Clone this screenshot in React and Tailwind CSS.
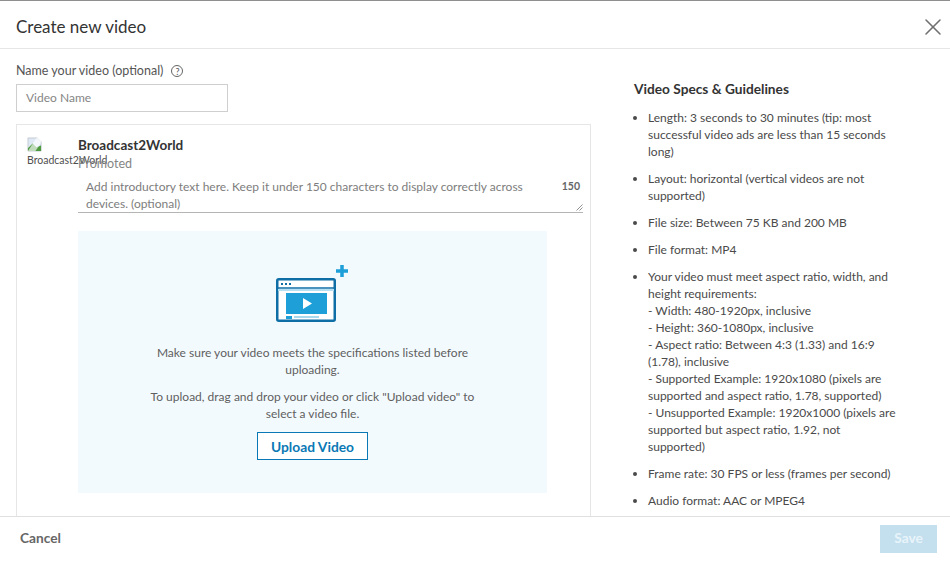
import { X } from "lucide-react";

const specs = [
  ["Length: 3 seconds to 30 minutes (tip: most successful video ads are less than 15 seconds long)"],
  ["Layout: horizontal (vertical videos are not supported)"],
  ["File size: Between 75 KB and 200 MB"],
  ["File format: MP4"],
  [
    "Your video must meet aspect ratio, width, and height requirements:",
    "- Width: 480-1920px, inclusive",
    "- Height: 360-1080px, inclusive",
    "- Aspect ratio: Between 4:3 (1.33) and 16:9 (1.78), inclusive",
    "- Supported Example: 1920x1080 (pixels are supported and aspect ratio, 1.78, supported)",
    "- Unsupported Example: 1920x1000 (pixels are supported but aspect ratio, 1.92, not supported)",
  ],
  ["Frame rate: 30 FPS or less (frames per second)"],
  ["Audio format: AAC or MPEG4"],
];

function BrokenImage() {
  return (
    <svg width="15" height="15" viewBox="0 0 16 16" className="block">
      <path d="M1 1h10l4 4v10H1z" fill="#dfe8f5" stroke="#b9c0c9" strokeWidth="0.8" />
      <path d="M1 12l5-5 4 4 5-2v6H1z" fill="#4d9a3f" />
      <path d="M10 1l-9 14h8l6-9V1z" fill="#ffffff" opacity="0.65" />
    </svg>
  );
}

function VideoIcon() {
  return (
    <svg width="74" height="58" viewBox="0 0 74 58" className="block">
      <rect x="1.25" y="15.25" width="57.5" height="41.5" rx="1.5" fill="#ffffff" stroke="#0f6ea6" strokeWidth="2.5" />
      <path d="M2 24h56" stroke="#0f6ea6" strokeWidth="1.5" />
      <path d="M2 26h56" stroke="#b5dff2" strokeWidth="2" />
      <rect x="5" y="19" width="2" height="2" fill="#0f6ea6" />
      <rect x="9" y="19" width="2" height="2" fill="#0f6ea6" />
      <rect x="13" y="19" width="2" height="2" fill="#0f6ea6" />
      <rect x="10" y="29" width="41" height="21" fill="#1e9fd8" />
      <path d="M27 34l9 5.5-9 5.5z" fill="#ffffff" />
      <rect x="10" y="52" width="6" height="3" fill="#1e9fd8" />
      <rect x="18" y="52" width="25" height="2" fill="#a9d9ef" />
      <path d="M66 1v12M60 7h12" stroke="#1e9fd8" strokeWidth="3.5" />
    </svg>
  );
}

export default function App() {
  return (
    <div className="flex h-[561px] w-[950px] flex-col overflow-hidden border-t border-[#8f8f8f] bg-white font-['Lato','Noto_Sans',sans-serif] text-[#4a4a4a]">
      <header className="flex h-[48px] shrink-0 items-center justify-between border-b border-[#e6e6e6] pl-4 pr-[3px] pt-[4px]">
        <h1 className="text-[17px] text-[#333333]">Create new video</h1>
        <X size={28} strokeWidth={1.3} className="text-[#6f6f6f]" />
      </header>

      <div className="flex min-h-0 flex-1 overflow-hidden">
        <div className="w-[591px] shrink-0 pl-4 pt-[13px]">
          <div className="flex items-center gap-2 text-[12.5px] leading-[18px] text-[#555555]">
            <span>Name your video (optional)</span>
            <span className="flex h-[12px] w-[12px] items-center justify-center rounded-full border border-[#666666] text-[9px] leading-none">?</span>
          </div>
          <div className="mt-[4px] flex h-[28px] w-[212px] items-center border border-[#cfcfcf] px-[9px] text-[12px] text-[#858585]">
            Video Name
          </div>

          <div className="mt-[12px] h-[420px] border border-[#e6e6e6] pl-[10px] pr-[7px] pt-[12px]">
            <div className="flex">
              <div className="h-[46px] w-[51px] shrink-0 overflow-visible whitespace-nowrap text-[10.5px] leading-[14px] text-[#4f4f4f]">
                <BrokenImage />
                <div className="mt-[1px]">Broadcast2World</div>
              </div>
              <div className="min-w-0 flex-1">
                <div className="text-[13.5px] font-bold leading-[16px] text-[#333333]">Broadcast2World</div>
                <div className="mt-[2px] text-[12.5px] leading-[18px] text-[#858585]">Promoted</div>
                <div className="flex h-[40px] border-b border-[#b5b5b5] pl-2 pt-[5px] text-[12px] leading-[17px] text-[#7d7d7d]">
                  <p className="w-[445px]">Add introductory text here. Keep it under 150 characters to display correctly across devices. (optional)</p>
                  <div className="ml-auto flex flex-col items-end justify-between">
                    <span className="mr-[3px] whitespace-nowrap text-[10.5px] font-bold leading-[17px] text-[#666666]">150</span>
                    <svg width="7" height="7" viewBox="0 0 7 7" className="mb-[1px]">
                      <path d="M0.5 6.5L6.5 0.5M3.5 6.5L6.5 3.5" stroke="#777777" strokeWidth="0.8" />
                    </svg>
                  </div>
                </div>
                <div className="mt-[18px] flex h-[262px] w-[469px] flex-col items-center bg-[#f3fafe] pt-[33px] text-center text-[12px] leading-[17px] text-[#5f5f5f]">
                  <VideoIcon />
                  <p className="mt-[22px] w-[330px]">Make sure your video meets the specifications listed before uploading.</p>
                  <p className="mt-[10px] w-[340px]">To upload, drag and drop your video or click "Upload video" to select a video file.</p>
                  <div className="mt-[10px] flex h-[28px] w-[111px] items-center justify-center border border-[#0a78b5] bg-white text-[13.8px] font-bold text-[#0a78b5]">
                    Upload Video
                  </div>
                </div>
              </div>
            </div>
          </div>
        </div>

        <aside className="ml-[43px] w-[265px] pt-[31px]">
          <h2 className="text-[13.7px] font-bold leading-[18px] text-[#333333]">Video Specs &amp; Guidelines</h2>
          <ul className="mt-[11px] flex list-disc flex-col gap-[10px] pl-[14px] text-[12px] leading-[17px] text-[#4a4a4a]">
            {specs.map((lines) => (
              <li key={lines[0]}>
                {lines.map((line) => (
                  <div key={line}>{line}</div>
                ))}
              </li>
            ))}
          </ul>
        </aside>
      </div>

      <footer className="flex h-[45px] shrink-0 items-center justify-between border-t border-[#e0e0e0] pb-[1px] pl-[20px] pr-[13px]">
        <span className="text-[13.7px] font-bold text-[#666666]">Cancel</span>
        <span className="flex h-[28px] w-[57px] items-center justify-center bg-[#c4e0ee] text-[13.7px] font-bold text-[#e8f4fa]">Save</span>
      </footer>
    </div>
  );
}
